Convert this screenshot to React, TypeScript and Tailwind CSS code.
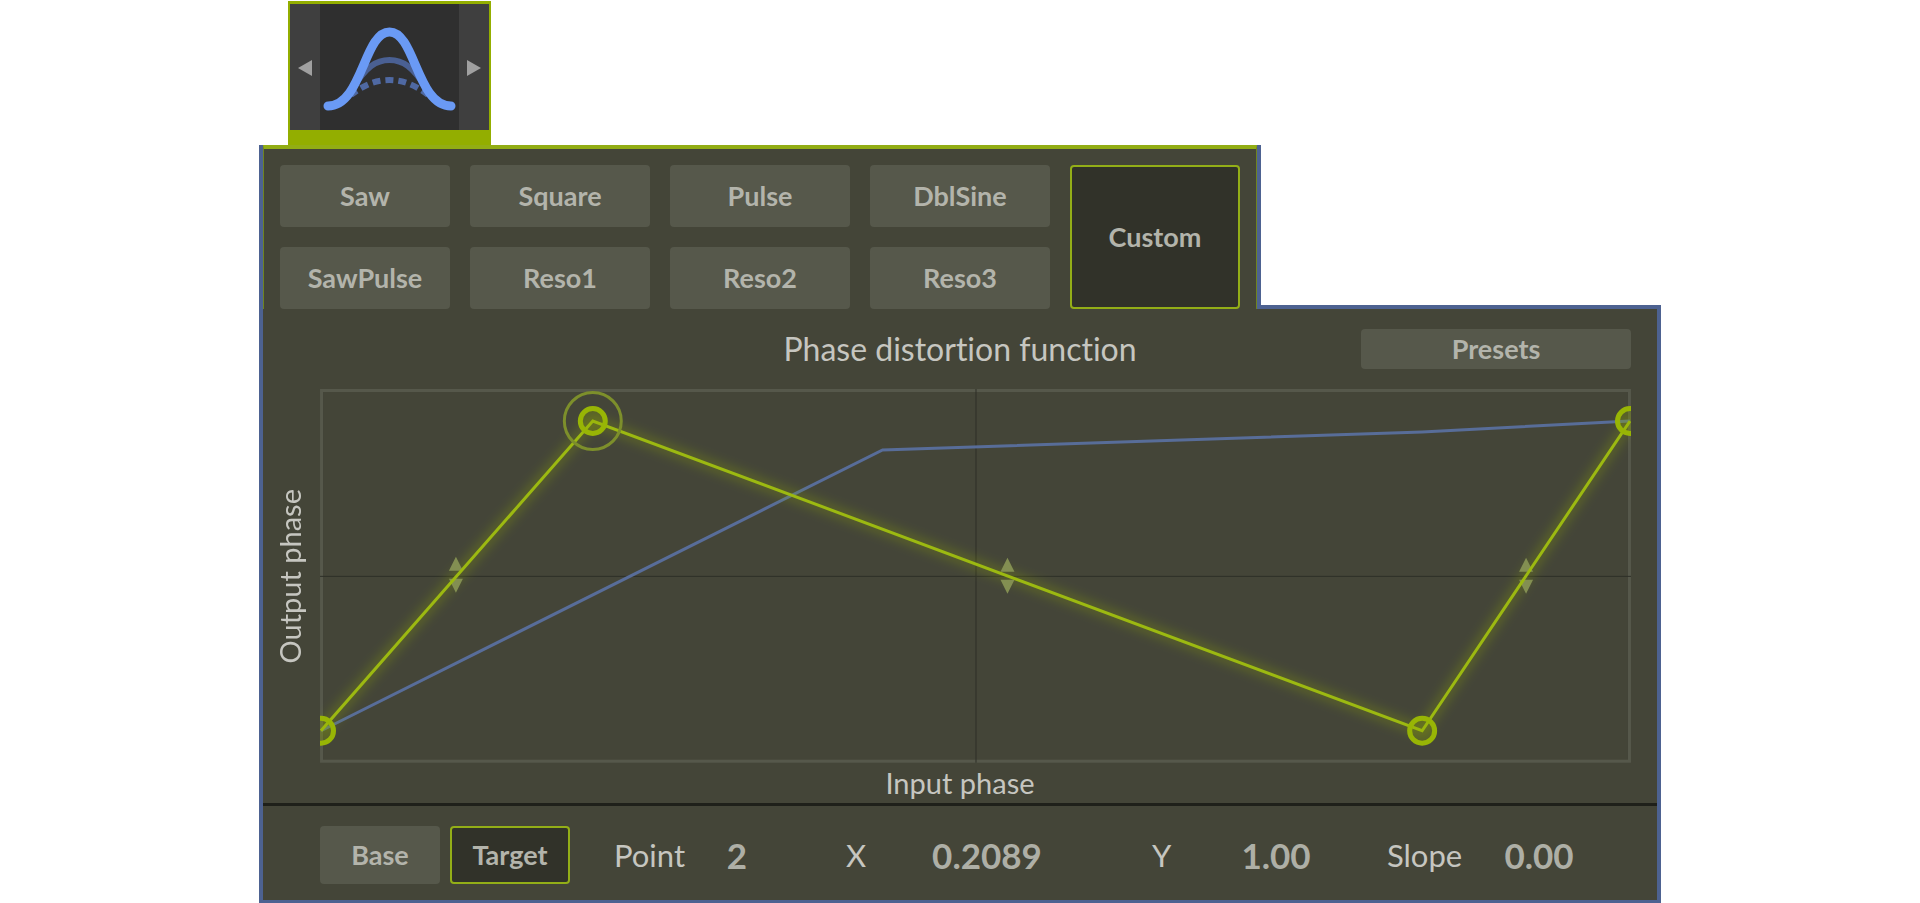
import { useState } from "react";
import clsx from "clsx";

interface CurvePoint {
  x: number;
  y: number;
}

interface Wave {
  name: string;
  tall?: boolean;
}

const WAVES: Wave[] = [
  { name: "Saw" },
  { name: "Square" },
  { name: "Pulse" },
  { name: "DblSine" },
  { name: "Custom", tall: true },
  { name: "SawPulse" },
  { name: "Reso1" },
  { name: "Reso2" },
  { name: "Reso3" },
];

const TARGET_POINTS: CurvePoint[] = [
  { x: 1, y: 342 },
  { x: 273, y: 32 },
  { x: 1103, y: 342 },
  { x: 1311, y: 32 },
];

const BASE_POINTS: CurvePoint[] = [
  { x: 1, y: 342 },
  { x: 563, y: 61 },
  { x: 1103, y: 43 },
  { x: 1311, y: 32 },
];

// slope handles, one per segment of the target curve
const SLOPE_HANDLES: CurvePoint[] = [
  { x: 136, y: 186 },
  { x: 688, y: 187 },
  { x: 1207, y: 187 },
];

const toPoints = (points: CurvePoint[]) => points.map((p) => `${p.x},${p.y}`).join(" ");

function ToggleButton({
  label,
  active,
  onClick,
  className,
}: {
  label: string;
  active: boolean;
  onClick: () => void;
  className?: string;
}) {
  return (
    <button
      onClick={onClick}
      aria-pressed={active}
      className={clsx(
        "flex items-center justify-center rounded text-[27px] leading-8 font-bold text-[#b3b4ab]",
        active ? "border-2 border-[#93ae17] bg-[#313229]" : "bg-[#56584b]",
        className
      )}
    >
      {label}
    </button>
  );
}

function AlgorithmTab() {
  return (
    <div className="mt-px ml-[29px] flex h-36 w-[203px] border-x-2 border-t-[3px] border-b-[15px] border-[#93ae00] bg-[#3f3f3f]">
      <button aria-label="Previous" className="flex w-[30px] items-center justify-center pt-[2px]">
        <svg width="14" height="16" viewBox="0 0 14 16" fill="#a0a0a0">
          <path d="M0 8 14 0V16Z" />
        </svg>
      </button>
      <div className="flex-1 bg-[#2f2f2f]">
        <svg className="block h-full w-full" viewBox="0 0 139 126" fill="none">
          <path
            d="M31 91C45 80 57 76 69.500 76S94 80 108 91"
            stroke="#4f69a3"
            strokeWidth="6"
            strokeDasharray="8 5"
            strokeDashoffset="1"
          />
          <path d="M33 84C46 63 56 56 69.500 56S93 63 106 84" stroke="#4a6093" strokeWidth="6" />
          <path
            d="M8 102C42 102 44 28 69.500 28S97 102 131 102"
            stroke="#6a9af5"
            strokeWidth="9"
            strokeLinecap="round"
          />
        </svg>
      </div>
      <button aria-label="Next" className="flex w-[30px] items-center justify-center pt-[2px]">
        <svg width="14" height="16" viewBox="0 0 14 16" fill="#a0a0a0">
          <path d="M14 8 0 0V16Z" />
        </svg>
      </button>
    </div>
  );
}

function PhaseGraph({ selected }: { selected: number }) {
  const active = TARGET_POINTS[selected];

  return (
    <svg className="block h-auto w-full" viewBox="0 0 1312 374" fill="none">
      <defs>
        <filter id="glow" x="-5%" y="-10%" width="110%" height="120%">
          <feGaussianBlur stdDeviation="6" />
        </filter>
      </defs>
      <rect x="1.500" y="1.500" width="1309" height="371" stroke="#56584b" strokeWidth="3" />
      <path d="M656.500 0V374M0 187.500H1312" stroke="#2e2f27" />
      <polyline points={toPoints(BASE_POINTS)} stroke="#586d99" strokeWidth="3" />
      <polyline
        points={toPoints(TARGET_POINTS)}
        stroke="#93ae00"
        strokeOpacity="0.35"
        strokeWidth="9"
        filter="url(#glow)"
      />
      {SLOPE_HANDLES.map((h) => (
        <path
          key={h.x}
          d={`M${h.x} ${h.y - 18}l7 14h-14zM${h.x} ${h.y + 18}l7 -14h-14z`}
          fill="#838f52"
        />
      ))}
      <polyline points={toPoints(TARGET_POINTS)} stroke="#9cb911" strokeWidth="3" />
      {TARGET_POINTS.map((p) => (
        <circle
          key={p.x}
          cx={p.x}
          cy={p.y}
          r="12.500"
          fill="#93ae00"
          fillOpacity="0.25"
          stroke="#98b505"
          strokeWidth="5"
        />
      ))}
      <circle cx={active.x} cy={active.y} r="28.500" stroke="#7d8f2b" strokeWidth="3" />
    </svg>
  );
}

function PointField({
  id,
  label,
  value,
  labelWidth,
  inputWidth,
}: {
  id: string;
  label: string;
  value: string;
  labelWidth: string;
  inputWidth: string;
}) {
  return (
    <div className="flex items-center">
      <label htmlFor={id} className={clsx("text-[31px] leading-10 text-[#c6c6c0]", labelWidth)}>
        {label}
      </label>
      <input
        id={id}
        type="text"
        defaultValue={value}
        className={clsx(
          "bg-transparent text-center text-[35px] leading-10 font-bold text-[#aeafa6] outline-none",
          inputWidth
        )}
      />
    </div>
  );
}

export default function App() {
  const [wave, setWave] = useState("Custom");
  const [layer, setLayer] = useState("Target");

  return (
    <div className="min-h-screen bg-white font-['Lato',sans-serif] [font-variant-ligatures:none]">
      <main className="mx-auto w-full max-w-[1402px]">
        <AlgorithmTab />

        <div className="flex items-end">
          <div className="border-x-4 border-[#4d6291]">
            <div className="grid grid-cols-[170px_180px_180px_180px_170px] gap-5 border-x border-t-4 border-x-[#6f8420] border-t-[#92ad14] bg-[#444538] px-4 pt-4">
              {WAVES.map((w) => (
                <ToggleButton
                  key={w.name}
                  label={w.name}
                  active={wave === w.name}
                  onClick={() => setWave(w.name)}
                  className={w.tall ? "row-span-2" : "h-[62px]"}
                />
              ))}
            </div>
          </div>
          <div className="h-1 flex-1 bg-[#4d6291]" />
        </div>

        <section className="border-x-4 border-b-[3px] border-[#4d6291] bg-[#444538]">
          <div className="grid grid-cols-[1fr_auto_1fr] items-center px-[26px] py-5">
            <h1 className="col-start-2 text-[32px] leading-10 text-[#c6c6c0]">
              Phase distortion function
            </h1>
            <button className="h-10 w-[270px] justify-self-end rounded bg-[#56584b] text-[27px] leading-8 font-bold text-[#b3b4ab]">
              Presets
            </button>
          </div>

          <div className="flex pr-[26px]">
            <div className="flex w-[57px] items-center justify-center pr-1">
              <span className="rotate-180 text-[29px] leading-8 whitespace-nowrap text-[#c6c6c0] [writing-mode:vertical-rl]">
                Output phase
              </span>
            </div>
            <div className="flex-1">
              <PhaseGraph selected={1} />
            </div>
          </div>
          <p className="h-10 text-center text-[29px] leading-10 text-[#c6c6c0]">Input phase</p>

          <div className="flex items-center border-t-[3px] border-[#1f201a] pt-5 pb-4 pl-[57px]">
            <div className="mr-11 flex items-center gap-[10px]">
              {["Base", "Target"].map((name) => (
                <ToggleButton
                  key={name}
                  label={name}
                  active={layer === name}
                  onClick={() => setLayer(name)}
                  className="h-[58px] w-[120px]"
                />
              ))}
            </div>
            <div className="grid grid-cols-[232px_306px_235px_197px]">
              <PointField id="point" label="Point" value="2" labelWidth="w-[93px]" inputWidth="w-[60px]" />
              <PointField id="x" label="X" value="0.2089" labelWidth="w-[76px]" inputWidth="w-[130px]" />
              <PointField id="y" label="Y" value="1.00" labelWidth="w-[79px]" inputWidth="w-[90px]" />
              <PointField id="slope" label="Slope" value="0.00" labelWidth="w-[107px]" inputWidth="w-[90px]" />
            </div>
          </div>
        </section>
      </main>
    </div>
  );
}
